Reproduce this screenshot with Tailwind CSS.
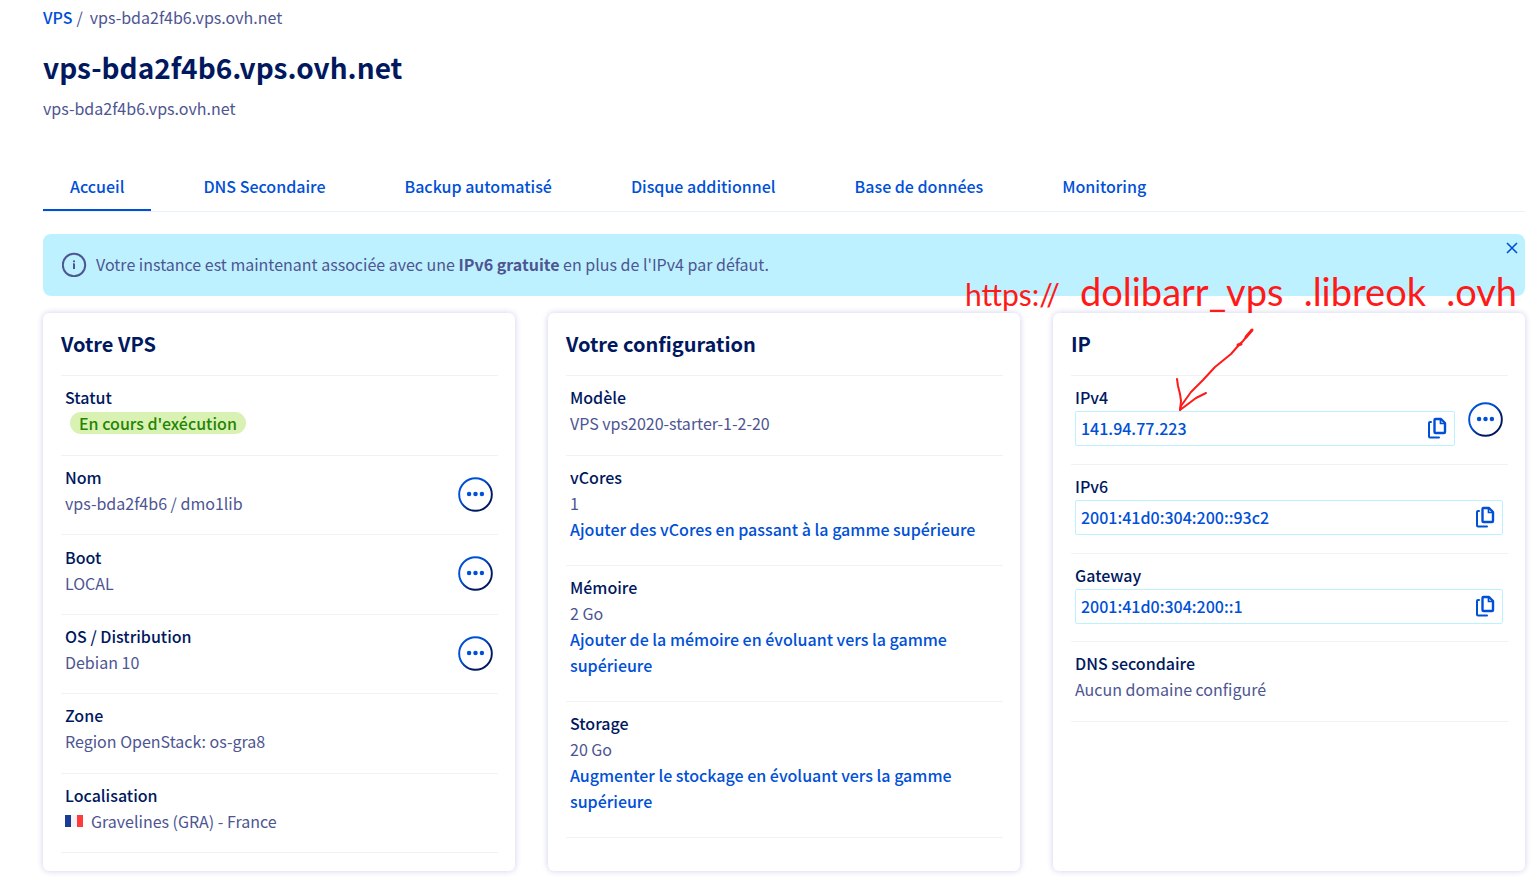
<!DOCTYPE html>
<html lang="fr">
<head>
  <meta charset="UTF-8">
  <title>vps-bda2f4b6.vps.ovh.net</title>
  <meta name="viewport" content="width=device-width, initial-scale=1.0">
  <script src="https://cdn.jsdelivr.net/npm/@tailwindcss/browser@4"></script>
</head>
<body class="bg-white font-['Noto_Sans_CJK_SC','Open_Sans',sans-serif] text-[16px] leading-[26px] text-[#4d5592] overflow-x-hidden">

  <!-- Shared icons -->
  <svg class="absolute size-0" aria-hidden="true">
    <defs>
      <linearGradient id="ring" x1="0" y1="0" x2="1" y2="1">
        <stop offset="0.4" stop-color="#0050d7"/>
        <stop offset="0.7" stop-color="#00185e"/>
      </linearGradient>
    </defs>
    <symbol id="icon-more" viewBox="0 0 36 36">
      <circle cx="18" cy="18" r="16.800" fill="none" stroke="url(#ring)" stroke-width="2"/>
      <g fill="#0050d7">
        <circle cx="11.400" cy="17.500" r="2.300"/>
        <circle cx="18" cy="17.500" r="2.300"/>
        <circle cx="24.600" cy="17.500" r="2.300"/>
      </g>
    </symbol>
    <symbol id="icon-copy" viewBox="0 0 20 22">
      <g fill="none" stroke="#0050d7" stroke-width="2.400" stroke-linejoin="round" stroke-linecap="round">
        <path d="M8.500 2h5.500l4 4v9a1 1 0 0 1-1 1H8.500a1 1 0 0 1-1-1V3a1 1 0 0 1 1-1z"/>
        <path d="M13.500 2.500v4h4" stroke-width="1.700"/>
        <path d="M4 5H3a1 1 0 0 0-1 1v13.500a1 1 0 0 0 1 1h9" stroke-width="2"/>
      </g>
    </symbol>
  </svg>

  <main class="pl-[43px] pr-[11px] pt-1 pb-3">
    <nav aria-label="Fil d'Ariane" class="flex">
      <a href="#" class="font-medium text-[#0050d7]">VPS</a>
      <span class="ml-1 mr-[7px]">/</span>
      <span>vps-bda2f4b6.vps.ovh.net</span>
    </nav>

    <h1 class="mt-[17px] text-[28px] leading-10 font-bold text-[#00185e]">vps-bda2f4b6.vps.ovh.net</h1>
    <p class="mt-2">vps-bda2f4b6.vps.ovh.net</p>

    <nav aria-label="Onglets" class="mt-[52px] flex gap-[25px] border-b border-[#e8f2fa] font-medium text-[#0050d7]">
      <a href="#" class="px-[27px] pb-[10px] border-b-2 border-[#0050d7]">Accueil</a>
      <a href="#" class="px-[27px] pb-[10px]">DNS Secondaire</a>
      <a href="#" class="px-[27px] pb-[10px]">Backup automatisé</a>
      <a href="#" class="px-[27px] pb-[10px]">Disque additionnel</a>
      <a href="#" class="px-[27px] pb-[10px]">Base de données</a>
      <a href="#" class="px-[27px] pb-[10px]">Monitoring</a>
    </nav>

    <div class="relative mt-[22px] flex items-center gap-[9px] rounded-lg bg-[#bef1ff] px-[19px] pt-[17px] pb-[19px]">
      <svg class="size-[25px] shrink-0" viewBox="0 0 25 25">
        <circle cx="12" cy="13" r="11.200" fill="none" stroke="#4d5592" stroke-width="2"/>
        <path d="M12 11.500v5.500" fill="none" stroke="#4d5592" stroke-width="2"/>
        <path d="M11 11.900h1" fill="none" stroke="#4d5592"/>
        <circle cx="12" cy="9.300" r="1.100" fill="#4d5592"/>
      </svg>
      <p>Votre instance est maintenant associée avec une <b class="font-bold">IPv6 gratuite</b> en plus de l'IPv4 par défaut.</p>
      <button type="button" aria-label="Fermer" class="absolute right-[7px] top-[8px]">
        <svg class="size-3" viewBox="0 0 12 12"><path d="M1 1l10 10M11 1L1 11" stroke="#0050d7" stroke-width="1.600"/></svg>
      </button>
    </div>

    <div class="mt-[17px] grid grid-cols-3 gap-[33px]">
      <!-- VPS -->
      <section class="rounded-md bg-white pl-[18px] pr-[17px] pt-[17px] pb-[18px] shadow-[0_0_6px_rgba(0,14,156,0.2)]">
        <h2 class="pb-[17px] text-[20px] leading-7 font-bold text-[#00185e]">Votre VPS</h2>
        <div class="flex min-h-[478px] flex-col divide-y divide-[#f2f2f2] border-y border-[#f2f2f2]">
          <div class="grow px-1 pt-2 pb-[17px]">
            <h3 class="font-medium text-[#00185e]">Statut</h3>
            <p class="flex h-[26px] items-center"><span class="ml-[5px] rounded-full bg-[#d9f2b4] px-[9px] leading-[22px] font-medium text-[#268403]">En cours d'exécution</span></p>
          </div>
          <div class="flex grow items-center justify-between pl-1 pr-[5px]">
            <div class="pt-2 pb-[17px]">
              <h3 class="font-medium text-[#00185e]">Nom</h3>
              <p>vps-bda2f4b6 / dmo1lib</p>
            </div>
            <button type="button" aria-label="Actions du nom" class="pb-px"><svg class="size-[35px]"><use href="#icon-more"/></svg></button>
          </div>
          <div class="flex grow items-center justify-between pl-1 pr-[5px]">
            <div class="pt-2 pb-[17px]">
              <h3 class="font-medium text-[#00185e]">Boot</h3>
              <p>LOCAL</p>
            </div>
            <button type="button" aria-label="Actions du boot" class="pb-px"><svg class="size-[35px]"><use href="#icon-more"/></svg></button>
          </div>
          <div class="flex grow items-center justify-between pl-1 pr-[5px]">
            <div class="pt-2 pb-[17px]">
              <h3 class="font-medium text-[#00185e]">OS / Distribution</h3>
              <p>Debian 10</p>
            </div>
            <button type="button" aria-label="Actions de l'OS" class="pb-px"><svg class="size-[35px]"><use href="#icon-more"/></svg></button>
          </div>
          <div class="grow px-1 pt-2 pb-[17px]">
            <h3 class="font-medium text-[#00185e]">Zone</h3>
            <p>Region OpenStack: os-gra8</p>
          </div>
          <div class="grow px-1 pt-2 pb-[17px]">
            <h3 class="font-medium text-[#00185e]">Localisation</h3>
            <p class="flex items-center gap-2">
              <svg class="h-3 w-[18px]" viewBox="0 0 18 12"><path fill="#1a3c96" d="M0 0h6v12H0z"/><path fill="#f4f4f6" d="M6 0h6v12H6z"/><path fill="#ff3b3b" d="M12 0h6v12h-6z"/></svg>
              Gravelines (GRA) - France
            </p>
          </div>
        </div>
      </section>

      <!-- Configuration -->
      <section class="rounded-md bg-white pl-[18px] pr-[17px] pt-[17px] pb-[18px] shadow-[0_0_6px_rgba(0,14,156,0.2)]">
        <h2 class="pb-[17px] text-[20px] leading-7 font-bold text-[#00185e]">Votre configuration</h2>
        <div class="divide-y divide-[#f2f2f2] border-y border-[#f2f2f2]">
          <div class="px-1 pt-2 pb-[19px]">
            <h3 class="font-medium text-[#00185e]">Modèle</h3>
            <p>VPS vps2020-starter-1-2-20</p>
          </div>
          <div class="px-1 pt-2 pb-[23px]">
            <h3 class="font-medium text-[#00185e]">vCores</h3>
            <p>1</p>
            <a href="#" class="block font-medium text-[#0050d7]">Ajouter des vCores en passant à la gamme supérieure</a>
          </div>
          <div class="px-1 pt-2 pb-[23px]">
            <h3 class="font-medium text-[#00185e]">Mémoire</h3>
            <p>2 Go</p>
            <a href="#" class="block font-medium text-[#0050d7]">Ajouter de la mémoire en évoluant vers la gamme supérieure</a>
          </div>
          <div class="px-1 pt-2 pb-[23px]">
            <h3 class="font-medium text-[#00185e]">Storage</h3>
            <p>20 Go</p>
            <a href="#" class="block font-medium text-[#0050d7]">Augmenter le stockage en évoluant vers la gamme supérieure</a>
          </div>
        </div>
      </section>

      <!-- IP -->
      <section class="relative rounded-md bg-white pl-[18px] pr-[17px] pt-[17px] pb-[18px] shadow-[0_0_6px_rgba(0,14,156,0.2)]">
        <h2 class="pb-[17px] text-[20px] leading-7 font-bold text-[#00185e]">IP</h2>
        <div class="divide-y divide-[#f2f2f2] border-y border-[#f2f2f2]">
          <div class="flex items-center gap-[13px] pl-1 pr-[5px]">
            <div class="min-w-0 grow pt-2 pb-[18px]">
              <label for="ipv4" class="mb-px block font-medium text-[#00185e]">IPv4</label>
              <div class="flex h-[35px] items-center rounded-xs border border-[#bef1ff] pl-[5px] pr-[7px] pb-[2px]">
                <input id="ipv4" type="text" readonly value="141.94.77.223" class="min-w-0 grow font-medium text-[#0050d7] outline-none">
                <button type="button" aria-label="Copier l'IPv4"><svg class="h-[22px] w-5"><use href="#icon-copy"/></svg></button>
              </div>
            </div>
            <button type="button" aria-label="Actions de l'IPv4" class="pb-px"><svg class="size-[35px]"><use href="#icon-more"/></svg></button>
          </div>
          <div class="pl-1 pr-[5px] pt-2 pb-[18px]">
            <label for="ipv6" class="mb-px block font-medium text-[#00185e]">IPv6</label>
            <div class="flex h-[35px] items-center rounded-xs border border-[#bef1ff] pl-[5px] pr-[7px] pb-[2px]">
              <input id="ipv6" type="text" readonly value="2001:41d0:304:200::93c2" class="min-w-0 grow font-medium text-[#0050d7] outline-none">
              <button type="button" aria-label="Copier l'IPv6"><svg class="h-[22px] w-5"><use href="#icon-copy"/></svg></button>
            </div>
          </div>
          <div class="pl-1 pr-[5px] pt-2 pb-[17px]">
            <label for="gateway" class="mb-px block font-medium text-[#00185e]">Gateway</label>
            <div class="flex h-[35px] items-center rounded-xs border border-[#bef1ff] pl-[5px] pr-[7px] pb-[2px]">
              <input id="gateway" type="text" readonly value="2001:41d0:304:200::1" class="min-w-0 grow font-medium text-[#0050d7] outline-none">
              <button type="button" aria-label="Copier la gateway"><svg class="h-[22px] w-5"><use href="#icon-copy"/></svg></button>
            </div>
          </div>
          <div class="px-1 pt-2 pb-[19px]">
            <h3 class="font-medium text-[#00185e]">DNS secondaire</h3>
            <p>Aucun domaine configuré</p>
          </div>
        </div>

        <!-- Red note and its arrow, over the banner and the card -->
        <p class="pointer-events-none absolute -left-[88px] -top-[44px] flex w-[552px] items-baseline justify-between whitespace-nowrap font-['Lato',sans-serif] text-[38px] leading-[44px] text-[#ff1a1a]">
          <span class="text-[30px]">https://</span><span>dolibarr_vps</span><span>.libreok</span><span>.ovh</span>
        </p>
        <svg class="pointer-events-none absolute left-[120px] top-[14px] h-[86px] w-[84px]" viewBox="0 0 84 86" fill="none" stroke="#ff1a1a" stroke-width="2" stroke-linecap="round" stroke-linejoin="round">
          <path d="M79 3L70 14L65 19L58 27L42 40L30 53L18 65L8 79L7 83L15 77L23 71L33 66"/>
          <path d="M4 52L5 59L7 67L8 74L7 83"/>
          <path d="M79 3L73 10M68 17L65 18" stroke-width="3"/>
        </svg>
      </section>
    </div>
  </main>
</body>
</html>
